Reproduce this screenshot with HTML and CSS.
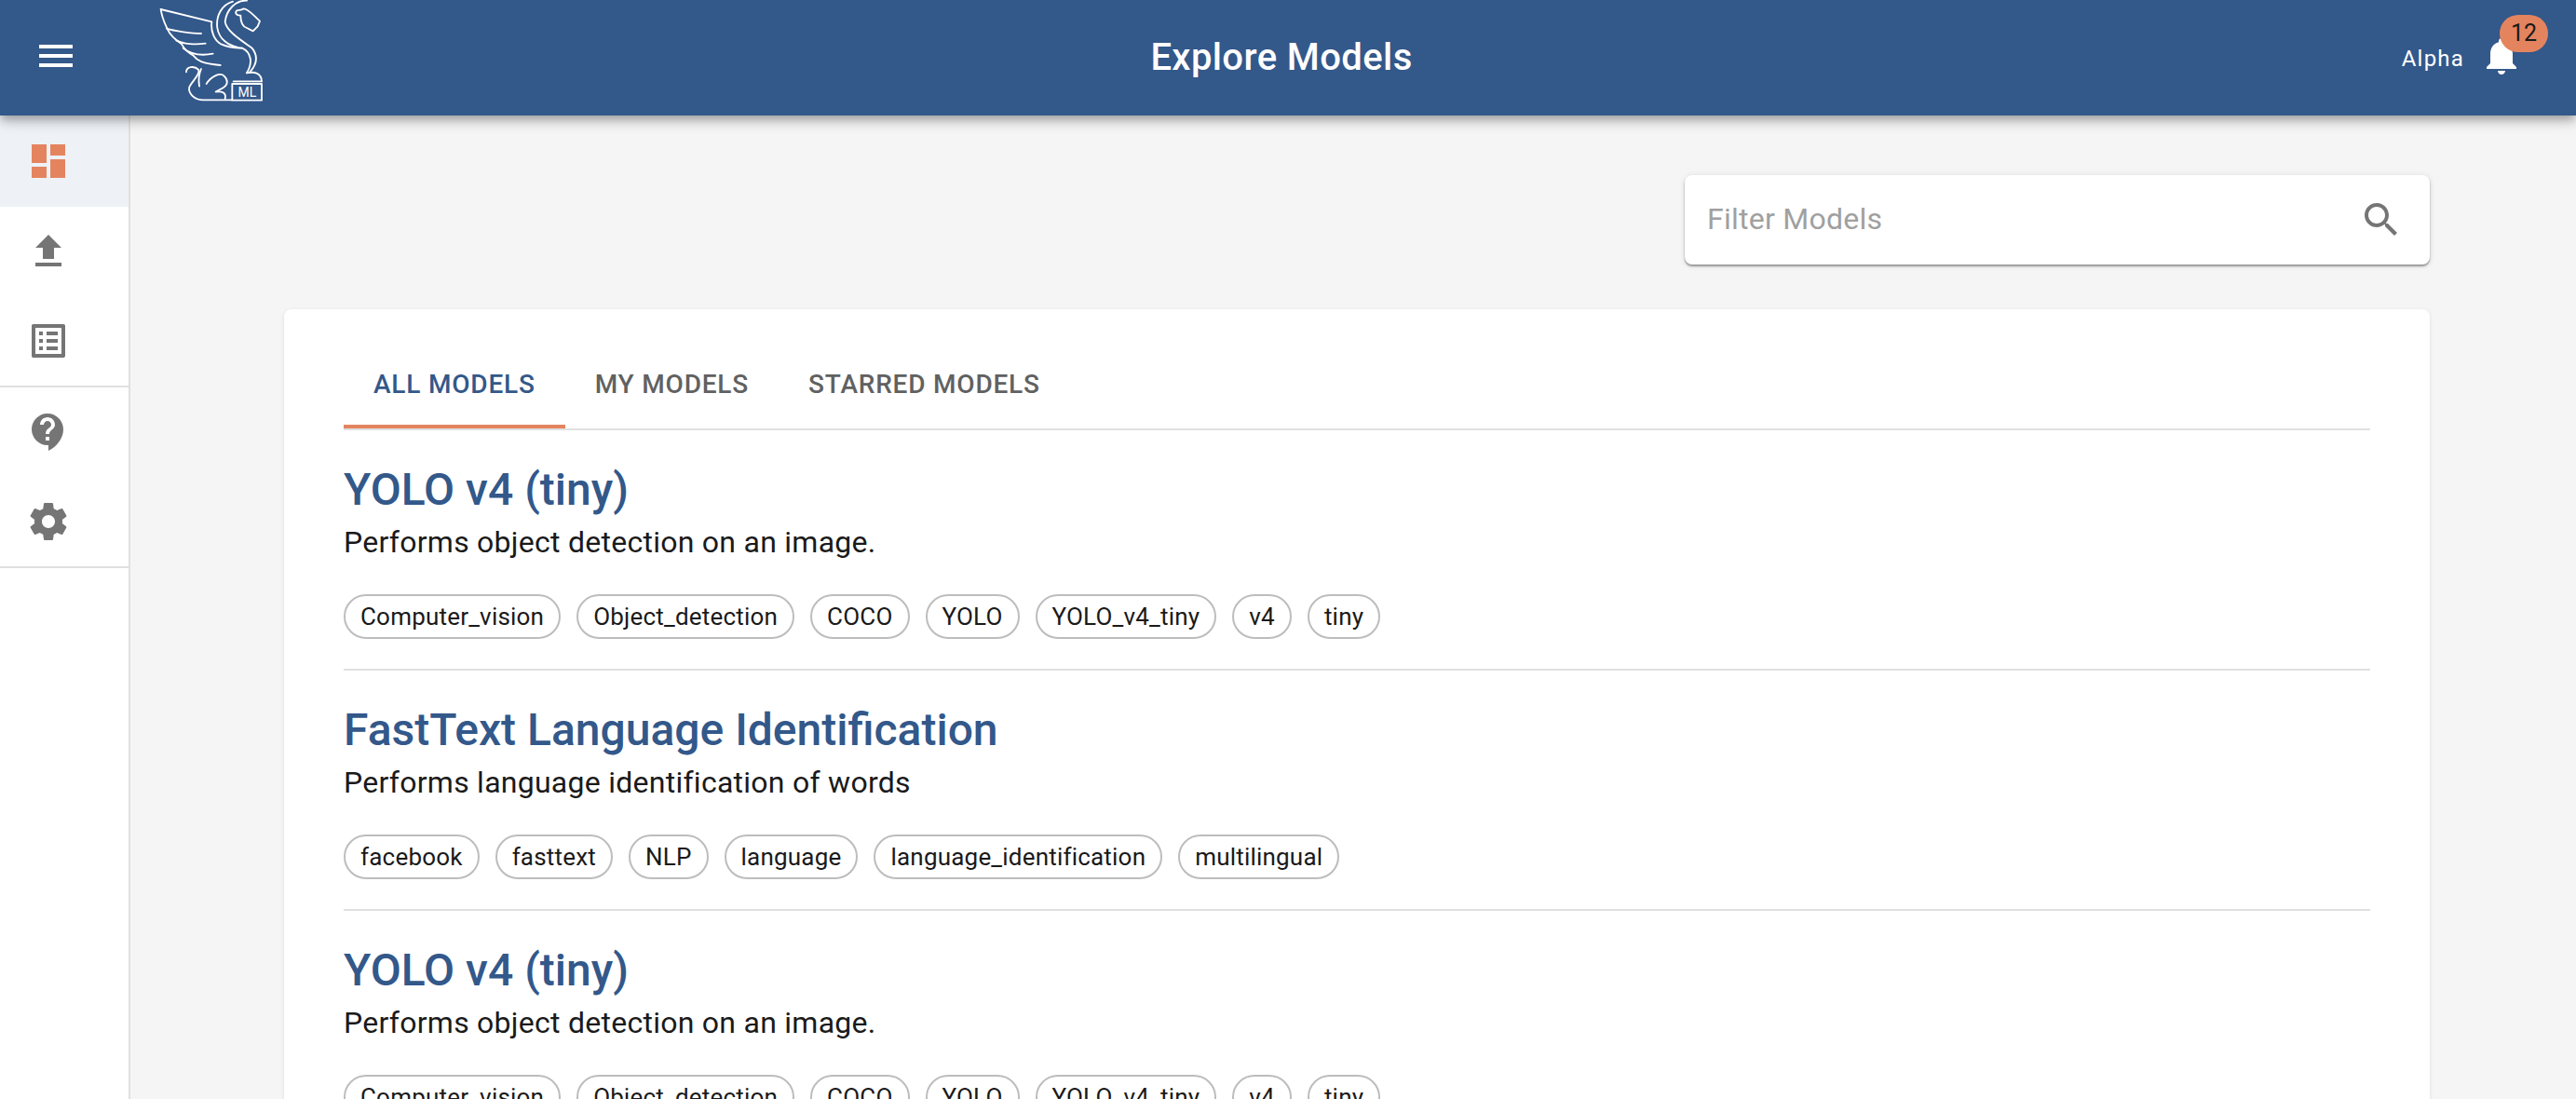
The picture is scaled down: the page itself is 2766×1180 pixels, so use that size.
FILE: index.html
```html
<!DOCTYPE html>
<html>
<head>
    <meta charset="utf-8">
    <link rel="stylesheet" href="styles.css">
</head>
<body>
    <div class="header">
        <div class="header-left">
            <svg class="icon menu-icon" viewBox="0 0 24 24"><path d="M3 18h18v-2H3v2zm0-5h18v-2H3v2zm0-7v2h18V6H3z"/></svg>
            <svg class="logo" viewBox="0 0 450 360">
                <g fill="none" stroke="#fff" stroke-width="5.5" stroke-linecap="round" stroke-linejoin="round">
                    <path d="M68 30L232 70C228 100 240 130 262 142C285 152 310 155 330 155"/>
                    <path d="M68 30C72 60 82 78 90 95C100 118 118 130 135 142C145 160 160 172 172 178C185 195 200 205 260 210"/>
                    <path d="M87 92C110 100 170 108 198 108"/>
                    <path d="M118 130C140 142 180 145 212 140"/>
                    <path d="M140 155C165 175 200 180 236 173"/>
                    <path d="M300 5C265 15 245 50 250 90C255 125 285 150 330 155C358 168 366 200 345 235"/>
                    <path d="M345 2C310 0 280 30 275 70C280 100 320 125 362 155C385 185 375 210 355 232"/>
                    <path d="M312 35C318 30 325 36 335 28C350 28 365 48 387 68L380 85L365 100L345 90C330 85 325 70 325 50C312 50 306 42 312 35z"/>
                    <path d="M150 232C150 215 175 210 190 225C195 240 170 260 160 280C155 300 175 322 205 322H297"/>
                    <path d="M198 222C190 240 190 265 192 278"/>
                    <path d="M215 270C230 245 260 232 272 245C285 258 285 272 270 282L245 296C265 292 280 300 275 318"/>
                    <path d="M345 235C370 230 392 235 393 262"/>
                    <path d="M302 262H393"/>
                    <rect x="298" y="270" width="95" height="53"/>
                </g>
                <text class="logo-text" x="346" y="313" text-anchor="middle">ML</text>
            </svg>
        </div>
        <div class="header-title">Explore Models</div>
        <div class="header-right">
            <span class="user-name">Alpha</span>
            <div class="bell">
                <svg class="icon bell-icon" viewBox="0 0 24 24"><path d="M12 22c1.1 0 2-.9 2-2h-4c0 1.1.89 2 2 2zm6-6v-5c0-3.07-1.64-5.64-4.5-6.32V4c0-.83-.67-1.5-1.5-1.5s-1.5.67-1.5 1.5v.68C7.63 5.36 6 7.92 6 11v5l-2 2v1h16v-1l-2-2z"/></svg>
                <span class="badge">12</span>
            </div>
        </div>
    </div>

    <div class="layout">
        <div class="sidebar">
            <div class="nav-group">
                <div class="nav-item active">
                    <svg class="icon" viewBox="0 0 24 24"><path d="M3 13h8V3H3v10zm0 8h8v-6H3v6zm10 0h8V11h-8v10zm0-18v6h8V3h-8z"/></svg>
                </div>
                <div class="nav-item">
                    <svg class="icon" viewBox="0 0 24 24"><path d="M9 16h6v-6h4l-7-7-7 7h4zm-4 2h14v2H5z"/></svg>
                </div>
                <div class="nav-item">
                    <svg class="icon" viewBox="0 0 24 24"><path d="M19 5v14H5V5h14m1.1-2H3.9c-.5 0-.9.4-.9.9v16.2c0 .4.4.9.9.9h16.2c.4 0 .9-.5.9-.9V3.9c0-.5-.5-.9-.9-.9zM11 7h6v2h-6V7zm0 4h6v2h-6v-2zm0 4h6v2h-6zM7 7h2v2H7zm0 4h2v2H7zm0 4h2v2H7z"/></svg>
                </div>
            </div>
            <div class="nav-group">
                <div class="nav-item">
                    <svg class="icon" viewBox="0 0 24 24"><path d="M11.5 2C6.81 2 3 5.81 3 10.5S6.81 19 11.5 19h.5v3c4.86-2.34 8-7 8-11.5C20 5.81 16.19 2 11.5 2zm1 14.5h-2v-2h2v2zm0-3.5h-2c0-3.25 3-3 3-5 0-1.1-.9-2-2-2s-2 .9-2 2h-2c0-2.21 1.79-4 4-4s4 1.79 4 4c0 2.5-3 2.75-3 5z"/></svg>
                </div>
                <div class="nav-item">
                    <svg class="icon" viewBox="0 0 24 24"><path d="M19.43 12.98c.04-.32.07-.64.07-.98s-.03-.66-.07-.98l2.11-1.65c.19-.15.24-.42.12-.64l-2-3.46c-.12-.22-.39-.3-.61-.22l-2.49 1c-.52-.4-1.08-.73-1.69-.98l-.38-2.65C14.46 2.18 14.25 2 14 2h-4c-.25 0-.46.18-.49.42l-.38 2.65c-.61.25-1.17.59-1.69.98l-2.49-1c-.23-.09-.49 0-.61.22l-2 3.46c-.13.22-.07.49.12.64l2.11 1.65c-.04.32-.07.65-.07.98s.03.66.07.98l-2.11 1.65c-.19.15-.24.42-.12.64l2 3.46c.12.22.39.3.61.22l2.49-1c.52.4 1.08.73 1.69.98l.38 2.65c.03.24.24.42.49.42h4c.25 0 .46-.18.49-.42l.38-2.65c.61-.25 1.17-.59 1.69-.98l2.49 1c.23.09.49 0 .61-.22l2-3.46c.12-.22.07-.49-.12-.64l-2.11-1.65zM12 15.5c-1.93 0-3.5-1.57-3.5-3.5s1.57-3.5 3.5-3.5 3.5 1.57 3.5 3.5-1.57 3.5-3.5 3.5z"/></svg>
                </div>
            </div>
        </div>

        <div class="main">
            <div class="filter-row">
                <div class="filter-box">
                    <span class="filter-placeholder">Filter Models</span>
                    <svg class="icon search-icon" viewBox="0 0 24 24"><path d="M15.5 14h-.79l-.28-.27C15.41 12.59 16 11.11 16 9.5 16 5.91 13.09 3 9.5 3S3 5.91 3 9.5 5.91 16 9.5 16c1.61 0 3.09-.59 4.23-1.57l.27.28v.79l5 4.99L20.49 19l-4.99-5zm-6 0C7.01 14 5 11.99 5 9.5S7.01 5 9.5 5 14 7.01 14 9.5 11.99 14 9.5 14z"/></svg>
                </div>
            </div>

            <div class="card">
                <div class="tabs">
                    <div class="tab selected">All Models</div>
                    <div class="tab">My Models</div>
                    <div class="tab">Starred Models</div>
                </div>

                <div class="model">
                    <div class="model-title">YOLO v4 (tiny)</div>
                    <div class="model-desc">Performs object detection on an image.</div>
                    <div class="chips">
                        <span class="chip">Computer_vision</span>
                        <span class="chip">Object_detection</span>
                        <span class="chip">COCO</span>
                        <span class="chip">YOLO</span>
                        <span class="chip">YOLO_v4_tiny</span>
                        <span class="chip">v4</span>
                        <span class="chip">tiny</span>
                    </div>
                </div>

                <div class="model">
                    <div class="model-title">FastText Language Identification</div>
                    <div class="model-desc">Performs language identification of words</div>
                    <div class="chips">
                        <span class="chip">facebook</span>
                        <span class="chip">fasttext</span>
                        <span class="chip">NLP</span>
                        <span class="chip">language</span>
                        <span class="chip">language_identification</span>
                        <span class="chip">multilingual</span>
                    </div>
                </div>

                <div class="model">
                    <div class="model-title">YOLO v4 (tiny)</div>
                    <div class="model-desc">Performs object detection on an image.</div>
                    <div class="chips">
                        <span class="chip">Computer_vision</span>
                        <span class="chip">Object_detection</span>
                        <span class="chip">COCO</span>
                        <span class="chip">YOLO</span>
                        <span class="chip">YOLO_v4_tiny</span>
                        <span class="chip">v4</span>
                        <span class="chip">tiny</span>
                    </div>
                </div>
            </div>
        </div>
    </div>
</body>
</html>
```

FILE: styles.css
```css
html, body {
    height: 100%;
}

body {
    margin: 0;
    display: flex;
    flex-direction: column;
    overflow: hidden;
    font-family: Roboto, sans-serif;
    background: #f5f5f5;
    color: #1a1a1a;
}

.icon {
    display: block;
    width: 48px;
    height: 48px;
    fill: #757575;
}

.header {
    position: relative;
    z-index: 2;
    flex: none;
    display: grid;
    grid-template-columns: 1fr auto 1fr;
    align-items: center;
    height: 124px;
    background: #33588a;
    box-shadow: 0 4px 8px -2px rgba(0,0,0,0.2), 0 8px 10px 0 rgba(0,0,0,0.14), 0 2px 20px 0 rgba(0,0,0,0.12);
    color: #fff;
}

.header-left {
    display: flex;
    align-items: flex-start;
    height: 100%;
    padding-left: 36px;
}

.menu-icon {
    margin-top: 36px;
    fill: #fff;
}

.logo {
    width: 150px;
    height: 120px;
    margin-left: 66px;
}

.logo-text {
    font-size: 42px;
    font-weight: 400;
    fill: #fff;
}

.header-title {
    font-size: 40px;
    font-weight: 500;
    letter-spacing: 0.4px;
    margin-left: -14px;
    margin-top: -2px;
}

.header-right {
    display: flex;
    justify-content: flex-end;
    align-items: center;
    padding-right: 56px;
}

.user-name {
    font-size: 24px;
    letter-spacing: 1.2px;
    margin-right: 16px;
    margin-top: 2px;
}

.bell {
    position: relative;
    margin-bottom: 4px;
}

.bell-icon {
    fill: #fff;
}

.badge {
    position: absolute;
    top: -20px;
    left: 22px;
    width: 52px;
    height: 40px;
    border-radius: 20px;
    background: #e4845f;
    color: #1a1a1a;
    font-size: 25px;
    line-height: 40px;
    text-align: center;
}

.layout {
    flex: 1;
    display: flex;
    min-height: 0;
}

.sidebar {
    flex: none;
    width: 138px;
    background: #fff;
    border-right: 2px solid #e0e0e0;
}

.nav-group {
    border-bottom: 2px solid #e0e0e0;
}

.nav-item {
    display: flex;
    align-items: center;
    height: 96px;
    padding-left: 28px;
}

.nav-item.active {
    height: 98px;
    background: #eef1f6;
}

.nav-item.active .icon {
    fill: #e4845f;
}

.main {
    flex: 1;
    min-width: 0;
    padding: 64px 157px 0 165px;
}

.filter-row {
    display: flex;
    justify-content: flex-end;
    margin-bottom: 48px;
}

.filter-box {
    display: flex;
    align-items: center;
    justify-content: space-between;
    width: 800px;
    height: 96px;
    box-sizing: border-box;
    padding: 0 28px 0 24px;
    background: #fff;
    border-radius: 8px;
    box-shadow: 0 2px 2px rgba(0,0,0,0.35), 0 1px 6px rgba(0,0,0,0.12);
}

.filter-placeholder {
    font-size: 32px;
    letter-spacing: 0.25px;
    color: #a0a0a0;
    margin-top: -2px;
}

.card {
    background: #fff;
    border-radius: 8px 8px 0 0;
    padding: 34px 64px 0;
    box-shadow: 0 1px 4px rgba(0,0,0,0.1);
}

.tabs {
    display: flex;
    border-bottom: 2px solid #e0e0e0;
}

.tab {
    display: flex;
    align-items: center;
    padding: 2px 32px 0;
    height: 94px;
    box-sizing: border-box;
    border-bottom: 4px solid transparent;
    font-size: 28px;
    font-weight: 500;
    letter-spacing: 0.8px;
    text-transform: uppercase;
    color: #616161;
}

.tab.selected {
    color: #33588a;
    border-bottom-color: #e4845f;
}

.model {
    height: 258px;
    box-sizing: border-box;
    border-bottom: 2px solid #e0e0e0;
    padding-top: 36px;
}

.model-title {
    font-size: 48px;
    line-height: 56px;
    font-weight: 500;
    color: #33588a;
}

.model-desc {
    font-size: 32px;
    line-height: 48px;
    letter-spacing: 0.26px;
    margin-top: 4px;
}

.chips {
    display: flex;
    gap: 17px;
    margin-top: 32px;
}

.chip {
    display: flex;
    align-items: center;
    height: 48px;
    box-sizing: border-box;
    padding: 0 16px;
    border: 2px solid #bdbdbd;
    border-radius: 24px;
    font-size: 26px;
    letter-spacing: 0.2px;
}
```
